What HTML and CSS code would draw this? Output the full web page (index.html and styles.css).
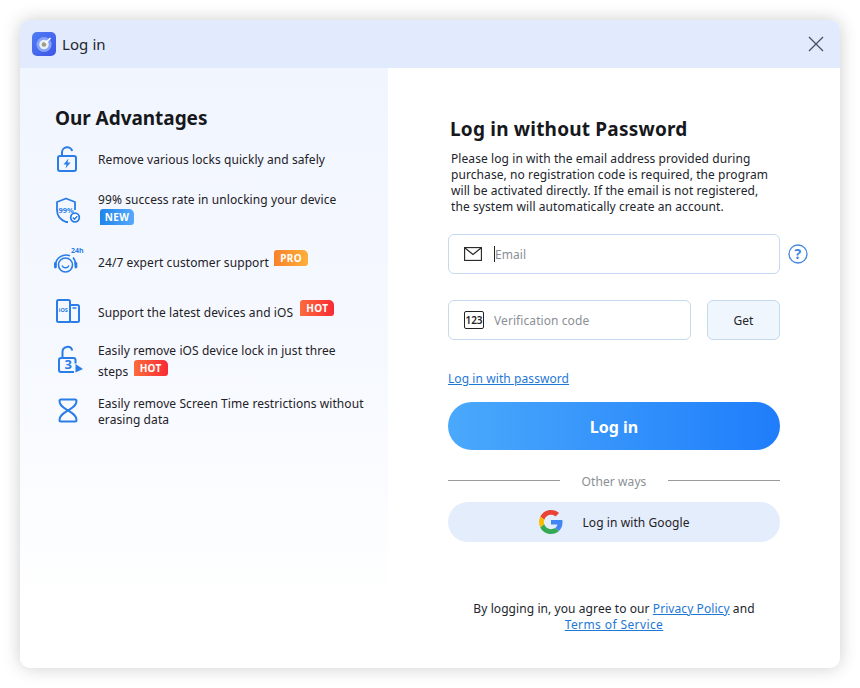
FILE: index.html
```html
<!DOCTYPE html>
<html lang="en">
<head>
<meta charset="utf-8">
<title>Log in</title>
<link rel="stylesheet" href="styles.css">
</head>
<body>
<div class="window">
  <header class="titlebar">
    <svg class="logo" viewBox="0 0 24 24"><defs><linearGradient id="lg" x1="0" y1="0" x2="1" y2="1"><stop offset="0" stop-color="#4f7df5"/><stop offset="1" stop-color="#3f55e6"/></linearGradient></defs><rect width="24" height="24" rx="5" fill="url(#lg)"/><circle cx="12" cy="12.500" r="7.600" fill="#86a4f7"/><circle cx="12" cy="12.500" r="4.800" fill="#e6edfc"/><circle cx="12" cy="12.500" r="2.300" fill="#a39c78"/><path d="M13.500 11 L18.500 6" stroke="#fff" stroke-width="1.600"/></svg>
    <span class="title">Log in</span>
    <svg class="close" viewBox="0 0 16 16"><path d="M1 1 L15 15 M15 1 L1 15" stroke="#46505f" stroke-width="1.300" fill="none"/></svg>
  </header>
  <div class="body">
    <aside class="side">
      <h2>Our Advantages</h2>
      <ul class="adv">
        <li><svg class="ico" viewBox="0 0 28 28" fill="none" stroke="#2a7de8" stroke-width="2"><rect x="3" y="10" width="18" height="15" rx="2"/><path d="M7 10 V6.500 a5.200 5.200 0 0 1 10.200 -1.500"/><path d="M13.500 12.500 L8.500 18.500 H11.500 L10.500 22.500 L15.500 16.500 H12.500 Z" fill="#2a7de8" stroke="none"/></svg><p>Remove various locks quickly and safely</p></li>
        <li><svg class="ico" viewBox="0 0 28 28" fill="none" stroke="#2a7de8" stroke-width="1.800" stroke-linejoin="round"><path d="M20 15 V7 L11 3.500 L2 7 V15 C2 21 6 25 11 27 H13"/><text x="3.500" y="17.500" class="ico-t">99%</text><circle cx="20" cy="22.500" r="4.300" fill="#fff"/><path d="M17.800 22.500 l1.700 1.700 l2.800 -3" stroke-width="1.500"/></svg><p>99% success rate in unlocking your device<br><span class="tag wrapped new">NEW</span></p></li>
        <li><svg class="ico" viewBox="0 0 28 28" fill="none" stroke="#2a7de8" stroke-width="1.600"><path d="M0.500 16 A10.500 10.500 0 0 1 15 6.800"/><path d="M20.500 16 A10.500 10.500 0 0 0 18 8.500"/><circle cx="10.500" cy="16" r="7"/><path d="M7 16.500 a3.800 3.800 0 0 0 7 0" stroke-width="1.500"/><rect x="-1" y="13" width="2.800" height="6.500" rx="1.400" fill="#2a7de8" stroke="none"/><rect x="19.500" y="13" width="2.800" height="6.500" rx="1.400" fill="#2a7de8" stroke="none"/><text x="16" y="3.500" class="ico-h">24h</text></svg><p>24/7 expert customer support <span class="tag pro">PRO</span></p></li>
        <li><svg class="ico" viewBox="0 0 28 28" fill="none" stroke="#2a7de8" stroke-width="2"><path d="M15 23 H3.500 a1.500 1.500 0 0 1 -1.500 -1.500 V2.500 a1.500 1.500 0 0 1 1.500 -1.500 H13.500 a1.500 1.500 0 0 1 1.500 1.500 V23"/><rect x="15" y="6" width="9" height="17" rx="1.500"/><path d="M17.500 9 h4" stroke-width="1.500"/><text x="3.800" y="13" class="ico-i">iOS</text></svg><p>Support the latest devices and iOS <span class="tag far hot">HOT</span></p></li>
        <li><svg class="ico" viewBox="0 0 28 28" fill="none" stroke="#2a7de8" stroke-width="2"><path d="M20.500 15.500 V12 a2 2 0 0 0 -2 -2 H6 a2 2 0 0 0 -2 2 V22 a2 2 0 0 0 2 2 H19"/><path d="M7.500 10 V4 a5 5 0 0 1 9.800 -1.500"/><text x="9.500" y="21" class="ico-3">3</text><path d="M20.500 16 L28 21 L20.500 24.500 Z" fill="#2a7de8" stroke="none"/></svg><p><span>Easily remove iOS device lock in just three</span> <span>steps</span> <span class="tag wrapped hot">HOT</span></p></li>
        <li><svg class="ico" viewBox="0 0 28 28" fill="none" stroke="#2a7de8" stroke-width="2" stroke-linejoin="round"><path d="M6 1.500 H20 a1.500 1.500 0 0 1 1.500 1.500 C21.500 8 17 10 13 12.500 C9 10 4.500 8 4.500 3 A1.500 1.500 0 0 1 6 1.500 Z"/><path d="M13 12.500 C17 15 21.500 17 21.500 22 a1.500 1.500 0 0 1 -1.500 1.500 H6 a1.500 1.500 0 0 1 -1.500 -1.500 C4.500 17 9 15 13 12.500 Z"/></svg><p>Easily remove Screen Time restrictions without erasing data</p></li>
      </ul>
    </aside>
    <main class="main">
      <h1>Log in without Password</h1>
      <p class="intro">Please log in with the email address provided during purchase, no registration code is required, the program will be activated directly. If the email is not registered, the system will automatically create an account.</p>
      <div class="row first">
        <label class="field grow">
          <svg class="fi" viewBox="0 0 18 14" fill="none" stroke="#222" stroke-width="1.100"><rect x=".6" y=".6" width="16.800" height="12.800"/><path d="M1 1 L9 7.500 L17 1"/></svg>
          <span class="caret"></span><span class="ph">Email</span>
        </label>
        <svg class="help" viewBox="0 0 20 20"><circle cx="10" cy="10" r="9" fill="none" stroke="#3f86df" stroke-width="1.300"/><text x="10" y="15" class="help-t">?</text></svg>
      </div>
      <div class="row second">
        <label class="field code">
          <span class="num">123</span>
          <span class="ph">Verification code</span>
        </label>
        <button class="get">Get</button>
      </div>
      <a class="link pw" href="#">Log in with password</a>
      <button class="login">Log in</button>
      <div class="other"><span>Other ways</span></div>
      <button class="google">
        <svg class="g" viewBox="0 0 48 48"><path fill="#EA4335" d="M24 9.500c3.500 0 6.700 1.200 9.200 3.600l6.900-6.900C35.900 2.400 30.500 0 24 0 14.600 0 6.500 5.400 2.600 13.200l8 6.200C12.400 13.600 17.700 9.500 24 9.500z"/><path fill="#4285F4" d="M47 24.500c0-1.600-.1-3.100-.4-4.500H24v9h12.900c-.6 3-2.200 5.500-4.700 7.200l7.700 6c4.500-4.200 7.100-10.300 7.100-17.700z"/><path fill="#FBBC05" d="M10.600 28.600c-.5-1.400-.8-3-.8-4.600s.3-3.200.8-4.600l-8-6.200C.9 16.500 0 20.100 0 24s.9 7.500 2.600 10.800l8-6.200z"/><path fill="#34A853" d="M24 48c6.500 0 11.900-2.100 15.900-5.800l-7.700-6c-2.200 1.500-4.900 2.300-8.200 2.300-6.300 0-11.600-4.200-13.400-9.900l-8 6.200C6.500 42.600 14.600 48 24 48z"/></svg>
        <span>Log in with Google</span>
      </button>
      <p class="terms">By logging in, you agree to our <a class="link" href="#">Privacy Policy</a> and<br><a class="link tos" href="#">Terms of Service</a></p>
    </main>
  </div>
</div>
</body>
</html>
```
FILE: styles.css
```css
* { box-sizing: border-box; }
html, body { margin: 0; height: 100%; }
body {
  background: #fff;
  padding: 20px;
  font-family: "Noto Sans", sans-serif;
  font-size: 12px;
  letter-spacing: .08px;
  color: #1e2126;
}
.window {
  width: 820px;
  height: 648px;
  background: #fff;
  border-radius: 10px;
  box-shadow: 0 0 18px rgba(0, 0, 0, .2);
  overflow: hidden;
  display: flex;
  flex-direction: column;
}
.titlebar {
  height: 48px;
  flex: none;
  background: #e2ebfd;
  display: flex;
  align-items: center;
  padding: 0 16px 0 12px;
}
.logo { width: 24px; height: 24px; }
.title { margin-left: 6px; font-size: 15px; color: #22252b; }
.close { width: 16px; height: 16px; margin-left: auto; }
.body { flex: 1; display: flex; min-height: 0; }
.side {
  width: 368px;
  flex: none;
  padding: 37px 20px 0 35px;
  background: linear-gradient(180deg, #f1f5fe 0%, #f6f9ff 50%, #ffffff 90%);
}
.side h2 { margin: 0; font-size: 19px; line-height: 26px; font-weight: 700; letter-spacing: -.05px; color: #16181c; }
.adv {
  list-style: none;
  margin: 6px 0 0;
  padding: 0;
  display: grid;
  grid-template-rows: 46px 51px 58px 42px 55px 46px;
}
.adv li { display: flex; align-items: center; gap: 15px; }
.adv p { margin: 0; line-height: 16px; flex: 1; }
.ico { width: 28px; height: 28px; flex: none; overflow: visible; }
.ico text { stroke: none; fill: #2a7de8; font-family: "Noto Sans", sans-serif; font-weight: 700; letter-spacing: 0; }
.ico-t { font-size: 7.500px; }
.ico-h { font-size: 7px; }
.ico-i { font-size: 5.500px; }
.ico-3 { font-size: 13px; }
.tag {
  display: inline-block;
  width: 34px;
  height: 16px;
  line-height: 16px;
  text-align: center;
  margin: -6px 0 -6px 2px;
  border-radius: 3px 5px 3px 0;
  color: #fff;
  font-size: 10px;
  font-weight: 700;
  letter-spacing: .3px;
  vertical-align: 5px;
}
.tag.far { margin-left: 4px; }
.tag.wrapped { margin-top: 1px; margin-bottom: 0; vertical-align: 4px; }
.tag.new { background: linear-gradient(90deg, #1f85ea, #56a8fb); vertical-align: 0; }
.pro { background: linear-gradient(90deg, #f98229, #fdb03b); }
.hot { background: linear-gradient(90deg, #fb6b3b, #f92a35); }
.main { flex: 1; padding: 49px 60px 0 60px; display: flex; flex-direction: column; }
.main h1 { margin: 0 0 0 2px; font-size: 19px; line-height: 24px; font-weight: 700; letter-spacing: .2px; color: #16181c; }
.intro { margin: 10px 0 0 3px; width: 325px; line-height: 16px; color: #22252b; }
.row { display: flex; align-items: center; }
.row.first { margin-top: 19px; }
.row.second { margin-top: 26px; }
.field {
  height: 40px;
  border: 1px solid #c5daf0;
  border-radius: 6px;
  display: flex;
  align-items: center;
  padding-left: 15px;
  background: #fff;
}
.grow { width: 332px; flex: none; }
.code { width: 243px; }
.fi { width: 18px; height: 14px; flex: none; }
.caret { width: 1px; height: 16px; background: #222; margin-left: 12px; }
.ph { color: #8b8f96; }
.code .ph { margin-left: 10px; }
.num {
  width: 20px;
  height: 18px;
  border: 1px solid #222;
  border-radius: 2px;
  font-size: 10px;
  font-weight: 600;
  line-height: 16px;
  text-align: center;
  letter-spacing: 0;
  color: #222;
}
.help { width: 20px; height: 20px; margin-left: 8px; }
.help-t { fill: #3f86df; font-size: 14px; font-weight: 700; text-anchor: middle; font-family: "Noto Sans", sans-serif; }
.get {
  width: 73px;
  height: 40px;
  margin-left: 16px;
  border: 1px solid #c5daf0;
  border-radius: 6px;
  background: #f0f6fd;
  font: inherit;
  letter-spacing: inherit;
  color: #22252b;
}
.link { color: #1e78d6; text-decoration: underline; }
.tos { letter-spacing: .4px; }
.pw { margin-top: 30px; line-height: 17px; align-self: flex-start; }
.login {
  margin-top: 15px;
  height: 48px;
  width: 332px;
  padding: 2px 0 0;
  border: 0;
  border-radius: 24px;
  background: linear-gradient(90deg, #4aa9fb, #1f7dfb);
  color: #fff;
  font: 700 16px "Noto Sans", sans-serif;
}
.other {
  margin-top: 21px;
  width: 332px;
  height: 18px;
  display: flex;
  align-items: center;
  gap: 22px;
  color: #8b8f96;
}
.other span { padding-top: 2px; }
.other::before, .other::after { content: ""; flex: 1; height: 1px; background: #9a9a9a; }
.google {
  margin-top: 13px;
  width: 332px;
  height: 40px;
  padding: 0 0 0 1px;
  border: 0;
  border-radius: 20px;
  background: #e4edfc;
  display: flex;
  align-items: center;
  justify-content: center;
  gap: 19px;
  font: inherit;
  letter-spacing: inherit;
  color: #1e2126;
}
.g { width: 24px; height: 24px; }
.terms { margin: 59px 0 0; width: 332px; text-align: center; line-height: 16px; color: #22252b; }
```
